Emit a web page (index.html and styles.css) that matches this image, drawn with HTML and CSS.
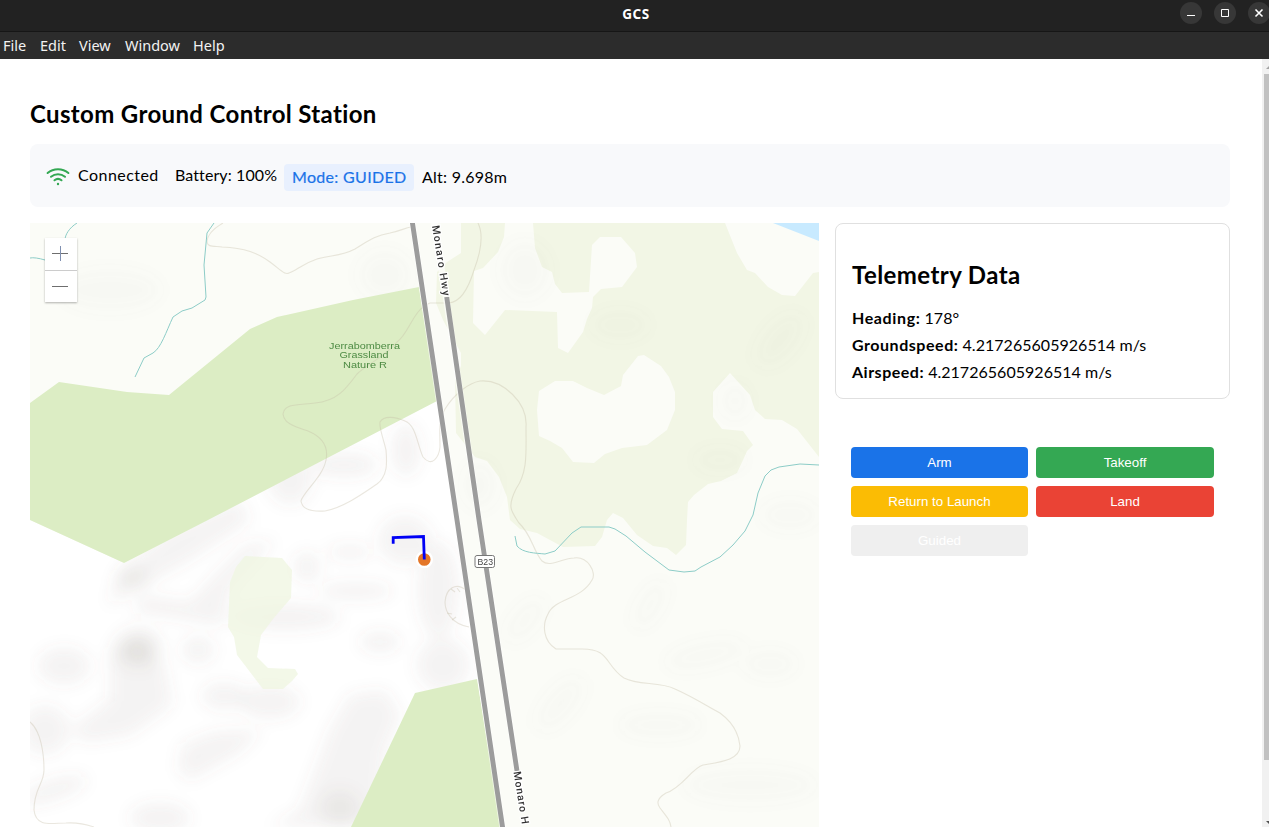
FILE: index.html
```html
<!DOCTYPE html>
<html lang="en">
<head>
<meta charset="utf-8">
<title>GCS</title>
<link rel="stylesheet" href="styles.css">
</head>
<body>
<div class="window">
  <header class="titlebar">
    <span class="title">GCS</span>
    <div class="controls">
      <svg class="ctl" viewBox="0 0 22 22"><circle cx="11" cy="11" r="11"/><path d="M7 13.5h8"/></svg>
      <svg class="ctl" viewBox="0 0 22 22"><circle cx="11" cy="11" r="11"/><path d="M7.5 7.5h7v7h-7z"/></svg>
      <svg class="ctl" viewBox="0 0 22 22"><circle cx="11" cy="11" r="11"/><path class="x" d="M7.5 7.5l7 7M14.5 7.5l-7 7"/></svg>
    </div>
  </header>
  <nav class="menubar"><span class="m1">File</span><span class="m2">Edit</span><span class="m3">View</span><span class="m4">Window</span><span class="m5">Help</span></nav>
  <div class="viewport">
    <main class="page">
      <h2 class="heading">Custom Ground Control Station</h2>
      <div class="status">
        <svg class="wifi" viewBox="0 0 24 24"><path d="M1.6 9C7.5 3.9 16.500 3.900 22.400 9M5 12.800c4.100-3.500 9.900-3.500 14 0M8.500 16.300c2.100-1.700 4.900-1.700 7 0"/><circle cx="12" cy="20" r="1.200"/></svg>
        <span class="conn">Connected</span>
        <span class="batt">Battery: 100%</span>
        <span class="mode">Mode: GUIDED</span>
        <span class="alt">Alt: 9.698m</span>
      </div>
      <div class="columns">
        <div class="map">
          <svg class="canvas" viewBox="30 223 789 604">
            <defs>
              <filter id="soft" x="-100%" y="-150%" width="300%" height="400%"><feGaussianBlur stdDeviation="8"/></filter>
              <clipPath id="west"><path d="M30 520L124 563L437 400L503 827H30Z"/></clipPath>
            </defs>
            <rect class="land" x="30" y="223" width="789" height="604"/>
            <path class="open" d="M30 520L124 563L437 400L478 679L503 827H30Z"/>
            <path class="forest" d="M461 223V253L447 262L437 272L436 303L443 320L461 353V366L455 380L456 433L475 457L487 461L499 477L507 497L510 520L520 529L537 533L563 547L595 546L602 537L607 520L613 513L623 518L637 535L653 546L667 548L676 555L686 545L687 520L688 502L694 495L708 484L721 481L737 473L743 460L747 451L753 445L743 431L722 429L713 417V392L730 373L750 395L755 410L765 419L782 420L797 429L819 457V272L813 273L795 296L782 295L768 287L755 273L747 270L737 253L725 223Z"/>
            <path class="land" d="M505 223L504 237L498 252L483 268L474 271L473 323L485 335L505 310L557 312L558 348L568 353L583 332L587 319L592 308L593 297L601 289L622 287L637 267L635 253L621 237H600L592 245L589 292L562 293L555 284L552 272L542 267L535 248L533 223Z"/>
            <path class="land" d="M539 391L555 381L573 381L587 388L604 395L621 386L623 375L638 356L644 355L661 366L669 377L675 392V410L667 430L647 445L622 448L605 454L594 463L573 462L562 448L550 441L539 436L537 410Z"/>
            <path class="water" d="M773 223H819V241Z"/>
            <g class="faint" filter="url(#soft)">
              <ellipse cx="735" cy="401" rx="13" ry="17"/><ellipse cx="780" cy="340" rx="32" ry="16" transform="rotate(-50 780 340)"/><ellipse cx="705" cy="655" rx="40" ry="12" transform="rotate(-12 705 655)"/><ellipse cx="770" cy="664" rx="26" ry="13"/><ellipse cx="560" cy="704" rx="32" ry="14" transform="rotate(-50 560 704)"/><ellipse cx="650" cy="605" rx="26" ry="11" transform="rotate(-60 650 605)"/><ellipse cx="790" cy="515" rx="28" ry="14"/><ellipse cx="525" cy="620" rx="26" ry="12" transform="rotate(-50 525 620)"/><ellipse cx="525" cy="270" rx="24" ry="28"/><ellipse cx="620" cy="325" rx="28" ry="14"/><ellipse cx="750" cy="785" rx="65" ry="16"/><ellipse cx="660" cy="725" rx="40" ry="12"/><ellipse cx="480" cy="485" rx="16" ry="24"/><ellipse cx="720" cy="460" rx="25" ry="11"/><ellipse cx="110" cy="290" rx="50" ry="20"/><ellipse cx="385" cy="275" rx="26" ry="24"/>
            </g>
            <g clip-path="url(#west)">
              <g class="shade" filter="url(#soft)">
                <path d="M108 605L120 570L170 530L240 500L250 520L190 560L135 590Z"/>
                <ellipse cx="138" cy="648" rx="24" ry="20"/><ellipse cx="140" cy="647" rx="15" ry="12"/><ellipse cx="133" cy="578" rx="16" ry="9"/>
                <path d="M110 650L135 640L165 665L172 705L130 735L85 742L70 730L110 700Z"/>
                <path d="M140 595L190 602L215 575L245 545L275 540L230 590L222 625L190 620L135 612Z"/>
                <ellipse cx="224" cy="696" rx="22" ry="13"/><ellipse cx="270" cy="702" rx="30" ry="16"/>
                <path d="M178 770L182 745L215 732L262 730L240 752L190 780Z"/>
                <ellipse cx="307" cy="567" rx="13" ry="15"/><ellipse cx="356" cy="591" rx="38" ry="8"/><ellipse cx="350" cy="552" rx="22" ry="7"/><ellipse cx="380" cy="642" rx="20" ry="10"/><ellipse cx="405" cy="540" rx="26" ry="24"/><ellipse cx="406" cy="450" rx="14" ry="26"/><ellipse cx="290" cy="480" rx="22" ry="24"/><ellipse cx="344" cy="465" rx="34" ry="12"/><ellipse cx="438" cy="590" rx="20" ry="48"/><ellipse cx="443" cy="665" rx="26" ry="26"/>
                <path d="M330 730L350 695L385 690L400 715L385 750L378 827H270L300 810L315 770Z"/>
                <ellipse cx="340" cy="808" rx="20" ry="18"/>
                <ellipse cx="160" cy="818" rx="30" ry="15"/><ellipse cx="53" cy="790" rx="35" ry="10" transform="rotate(-18 53 790)"/><ellipse cx="64" cy="666" rx="26" ry="18"/><ellipse cx="45" cy="730" rx="24" ry="24"/><ellipse cx="198" cy="650" rx="16" ry="13"/><ellipse cx="285" cy="617" rx="55" ry="13"/>
              </g>
            </g>
            <path class="grove" d="M245 556L282 558L292 570L291 598L273 619L261 635L257 657L268 668L295 669L298 674L292 681L283 689H263L237 655L234 637L228 627L230 582L236 567Z"/>
            <path class="reserve" d="M30 403L59 382L127 392L169 395L250 329L277 317L353 300L419 287L437 401L208 520L124 563L30 520Z"/>
            <path class="reserve" d="M415 693L477 679L501 827H351Z"/>
            <g class="contour">
              <path d="M223 223C211 230 207 236 207 242C208 247 212 246 222 247C245 248 258 253 270 262C282 271 285 275 289 273C297 270 302 264 317 259C332 255 342 256 355 249C367 242 373 236 390 233C400 231 405 228 411 227"/>
              <path d="M478 223C484 235 480 254 474 270C468 290 460 302 449 303L430 303C413 309 409 334 397 342C386 356 366 365 357 374C346 389 337 401 315 403C300 405 284 403 283 414C284 424 296 427 308 431C320 436 329 445 326 460C323 477 303 492 301 501C302 509 310 512 325 511C345 507 365 492 377 484C388 476 387 462 386 450C383 437 379 428 380 422C384 415 396 417 405 421C416 425 417 444 423 457C432 468 439 457 440 447C440 430 438 420 445 409C455 393 469 383 480 381C503 379 528 403 526 427C526 452 528 472 516 489C507 507 511 511 519 523C532 535 533 551 542 561C550 568 562 558 574 558C588 556 597 573 592 580C581 600 555 598 548 614C542 625 543 641 556 649H580C611 648 604 665 624 678C639 686 659 681 675 689C695 698 705 705 720 713C735 724 739 736 740 746C740 760 720 762 703 765C692 768 682 788 666 793C656 799 657 804 660 808C667 817 670 820 671 827"/>
              <path d="M466 590C456 582 446 588 445 602C445 612 452 624 469 627M30 722C41 731 44 754 44 770C44 784 34 788 34 810C36 828 52 823 66 823C80 822 88 825 94 827"/>
              <path d="M451 589l4 3M457 588l3 4M447 613l5 1M452 620l4-3"/>
            </g>
            <path class="stream" d="M77 223C69 228 65 235 65 240M30 258Q35 257 45 260M214 223L207 233L204 265L206 297L205 300L192 308L182 311L173 317C166 332 161 348 153 353L144 358L135 377M515 536L517 546C523 553 535 553 545 554L555 551L572 533L581 527H609L615 529L626 536L645 552L669 570L684 572L695 571L701 567L720 557L733 545L745 531L753 515L758 493L765 476L771 470L779 467L800 464L819 465"/>
            <path class="casing" d="M412 220L457 520L503 830M434 220L446 297L479 520L520 790"/>
            <path class="road" d="M412 220L457 520L503 830M446.700 297L479 520L517 771"/>
            <g class="roadname">
              <text transform="translate(432 226) rotate(81)" textLength="71">Monaro Hwy</text>
              <text transform="translate(513.500 772) rotate(81)" textLength="53">Monaro H</text>
            </g>
            <g class="placename"><text x="329" y="349" textLength="71" lengthAdjust="spacingAndGlyphs">Jerrabomberra</text><text x="339.500" y="358" textLength="49" lengthAdjust="spacingAndGlyphs">Grassland</text><text x="343" y="368" textLength="44" lengthAdjust="spacingAndGlyphs">Nature R</text></g>
            <rect class="shield" x="475" y="555.500" width="19.500" height="12" rx="2"/>
            <text class="shieldtext" x="477.500" y="565" textLength="15.500" lengthAdjust="spacingAndGlyphs">B23</text>
            <circle class="drone" cx="424.300" cy="559.500" r="7.500"/>
            <path class="track" d="M393.200 543.700V537.500L423.500 536.500L424.300 559.500"/>
          </svg>
          <div class="zoom">
            <svg class="zbtn" viewBox="0 0 32 32"><path d="M7 15.500h16"/><path class="v-bar" d="M15.500 8v15"/></svg>
            <svg class="zbtn" viewBox="0 0 32 31"><path d="M7 15.500h16"/></svg>
          </div>
        </div>
        <aside class="side">
          <section class="card">
            <h2 class="cardtitle">Telemetry Data</h2>
            <p class="row"><b class="k1">Heading:</b> <span class="v">178°</span></p>
            <p class="row"><b class="k2">Groundspeed:</b> <span class="v">4.217265605926514 m/s</span></p>
            <p class="row"><b class="k3">Airspeed:</b> <span class="v">4.217265605926514 m/s</span></p>
          </section>
          <div class="actions">
            <button class="btn blue">Arm</button>
            <button class="btn green">Takeoff</button>
            <button class="btn yellow">Return to Launch</button>
            <button class="btn red">Land</button>
            <button class="btn idle">Guided</button>
          </div>
        </aside>
      </div>
    </main>
    <div class="scrollbar">
      <svg class="arrow" viewBox="0 0 7 15"><path fill="#a3a3a3" d="M4 10L7 7V10Z"/></svg>
      <div class="thumb"></div>
      <svg class="arrow" viewBox="0 0 7 15"><path fill="#505050" d="M4 9H7V12Z"/></svg>
    </div>
  </div>
</div>
</body>
</html>
```
FILE: styles.css
```css
* { box-sizing: border-box; }
body { margin: 0; background: #fff; color: #000; font-family: Lato, "Open Sans", sans-serif; overflow: hidden; }
.window { display: flex; flex-direction: column; width: 1269px; height: 827px; overflow: hidden; }
.titlebar { display: grid; grid-template-columns: 1fr auto 1fr; height: 32px; flex: none; background: #222; border-bottom: 1px solid #161616; color: #fff; }
.title { grid-column: 2; padding-left: 3px; font: bold 13.5px/28px "Noto Sans", sans-serif; letter-spacing: .6px; }
.controls { display: flex; gap: 12px; justify-content: flex-end; padding-top: 2px; margin-right: -1px; }
.ctl { width: 22px; height: 22px; flex: none; }
.ctl circle { fill: #373737; }
.ctl path { fill: none; stroke: #fff; stroke-width: 1; }
.ctl .x { stroke-width: 1.6; }
.menubar { display: flex; height: 27px; flex: none; padding-left: 3px; background: #2c2c2c; color: #f2f2f2; font: 14.500px/26px "Noto Sans", sans-serif; }
.m1 { width: 37px; } .m2 { width: 39px; } .m3 { width: 46px; } .m4 { width: 68px; }
.viewport { display: flex; flex: 1; min-height: 0; }
.page { flex: 1; padding: 40px 32px 0 30px; overflow: hidden; }
.heading { margin: 0 0 15px; font-size: 24px; line-height: 30px; font-weight: 700; letter-spacing: .36px; white-space: nowrap; }
.status { display: flex; align-items: flex-start; height: 63px; padding: 20px 16px; background: #f8f9fb; border-radius: 8px; font-size: 16px; line-height: 21px; white-space: nowrap; }
.wifi { width: 24px; height: 24px; margin-right: 8px; flex: none; }
.wifi path { fill: none; stroke: #34a853; stroke-width: 2; stroke-linecap: round; }
.wifi circle { fill: #34a853; }
.conn { width: 97px; letter-spacing: .45px; }
.batt { width: 109px; letter-spacing: .1px; }
.mode { width: 130px; height: 27px; padding-left: 8px; margin-right: 8px; border-radius: 4px; background: #e8f0fe; color: #1a73e8; line-height: 25px; letter-spacing: .32px; -webkit-text-stroke: .2px #1a73e8; }
.alt { line-height: 25px; letter-spacing: .25px; }
.columns { display: flex; gap: 16px; margin-top: 16px; height: 604px; }
.map { position: relative; width: 789px; height: 604px; flex: none; overflow: hidden; }
.canvas { display: block; width: 789px; height: 604px; }
.land { fill: #fbfcf7; }
.open { fill: #fff; }
.forest { fill: #f2f6e5; }
.grove { fill: #eff6e0; fill-opacity: .75; }
.reserve { fill: #dcedc4; }
.water { fill: #c8eaff; }
.faint { fill: #777; fill-opacity: .032; }
.shade { fill: #655f55; fill-opacity: .075; }
.contour { fill: none; stroke: #c5bca5; stroke-opacity: .36; stroke-width: 1.1; }
.stream { fill: none; stroke: #8cccc7; stroke-width: 1; }
.casing { fill: none; stroke: #fff; stroke-opacity: .6; stroke-width: 6.500; }
.road { fill: none; stroke: #9c9c9c; stroke-width: 4.900; }
.roadname { font: 500 10.500px Roboto, sans-serif; fill: #333; stroke: #fff; stroke-width: 2.500; paint-order: stroke; }
.placename { font: 9.500px "Liberation Sans", sans-serif; fill: #4d8b43; }
.shield { fill: #fff; stroke: #777; }
.shieldtext { font: 9.500px "Liberation Sans", sans-serif; fill: #444; }
.drone { fill: #e47628; stroke: #fff; stroke-width: 2.400; }
.track { fill: none; stroke: #0000f5; stroke-width: 2.800; }
.zoom { position: absolute; left: 15px; top: 15px; width: 32px; height: 64px; background: #fff; box-shadow: 0 1px 2px rgba(0,0,0,.3); }
.zbtn { display: block; width: 32px; height: 32px; }
.zbtn + .zbtn { border-top: 1px solid #ccc; }
.zbtn path { fill: none; stroke: #6e6e6e; stroke-width: 1; }
.zbtn .v-bar { stroke: #7f8fb0; }
.side { flex: 1; display: flex; flex-direction: column; gap: 32px; }
.card { height: 176px; padding: 36px 16px 0; border: 1px solid #e0e0e0; border-radius: 8px; }
.cardtitle { margin: 0 0 14px; font-size: 24px; line-height: 30px; font-weight: 700; letter-spacing: .42px; }
.row { margin: 0; font-size: 16px; line-height: 27px; white-space: nowrap; }
.k1 { letter-spacing: .62px; } .k2 { letter-spacing: .54px; } .k3 { letter-spacing: .5px; }
.v { letter-spacing: .03px; }
.actions { display: grid; grid-template-columns: 177px 178px; grid-auto-rows: 31px; gap: 8px; padding: 16px; }
.btn { border: 0; padding: 0; border-radius: 4px; color: #fff; font: 13.333px "Liberation Sans", sans-serif; }
.blue { background: #1a73e8; } .green { background: #34a853; } .yellow { background: #fbbc04; } .red { background: #ea4335; } .idle { background: #efefef; }
.scrollbar { display: flex; flex-direction: column; width: 7px; background: #f1f1f1; }
.arrow { width: 7px; height: 15px; flex: none; }
.arrow + .thumb { height: 686px; margin-left: 2px; background: #c1c1c1; }
.thumb + .arrow { margin-top: auto; }
```
